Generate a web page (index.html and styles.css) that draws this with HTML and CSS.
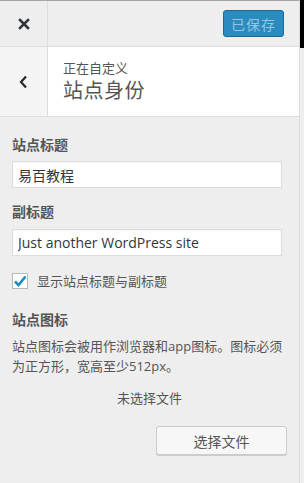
FILE: index.html
```html
<!DOCTYPE html>
<html lang="zh-CN">
<head>
  <meta charset="UTF-8">
  <meta name="viewport" content="width=device-width, initial-scale=1.0">
  <title>站点身份</title>
  <link rel="stylesheet" href="styles.css">
</head>
<body>
  <div class="frame">
    <!-- Panneau de personnalisation -->
    <div class="panel">
      <div class="topbar">
        <button class="close" type="button" aria-label="关闭">
          <svg width="12" height="12" viewBox="0 0 12 12"><path d="M2 2 L10 10 M10 2 L2 10" stroke="#32373c" stroke-width="2.6" stroke-linecap="square"/></svg>
        </button>
        <button class="saved" type="button" disabled>已保存</button>
      </div>

      <div class="section-title">
        <button class="back" type="button" aria-label="返回">
          <svg width="9" height="14" viewBox="0 0 9 14"><path d="M7 1.5 L2 7 L7 12.5" fill="none" stroke="#23282d" stroke-width="2.2"/></svg>
        </button>
        <div class="title-text">
          <span class="action">正在自定义</span>
          <h2>站点身份</h2>
        </div>
      </div>

      <div class="controls">
        <label class="field-label" for="blogname">站点标题</label>
        <input type="text" id="blogname" value="易百教程">

        <label class="field-label" for="blogdescription">副标题</label>
        <input type="text" id="blogdescription" value="Just another WordPress site">

        <label class="check-row">
          <span class="checkbox">
            <svg width="14" height="12" viewBox="0 0 14 12"><path d="M2 6.5 L5.5 10 L12.5 1.5" fill="none" stroke="#1e8cbe" stroke-width="2.6"/></svg>
          </span>
          显示站点标题与副标题
        </label>

        <h3 class="field-label icon-label">站点图标</h3>
        <p class="description">站点图标会被用作浏览器和app图标。图标必须为正方形，宽高至少512px。</p>

        <div class="file-area">
          <p class="no-file">未选择文件</p>
          <div class="file-actions">
            <button class="select-file" type="button">选择文件</button>
          </div>
        </div>
      </div>
    </div>

    <!-- Bord de la prévisualisation -->
    <div class="edge">
      <div class="edge-top"></div>
    </div>
  </div>
</body>
</html>
```

FILE: styles.css
```css
* {
  margin: 0;
  padding: 0;
  box-sizing: border-box;
}

body {
  font-family: "Open Sans", "Noto Sans CJK SC", sans-serif;
  background-color: #eee;
  color: #555;
  width: 304px;
  height: 483px;
  overflow: hidden;
}

.frame {
  display: flex;
  height: 483px;
}

.panel {
  width: 300px;
  background-color: #eee;
  border-top: 1px solid #a0a5aa;
  border-right: 1px solid #ddd;
  display: flex;
  flex-direction: column;
}

.topbar {
  height: 46px;
  display: flex;
  align-items: center;
  border-bottom: 1px solid #ddd;
}

.close {
  width: 48px;
  height: 45px;
  border: none;
  border-right: 1px solid #ddd;
  background: transparent;
  display: flex;
  align-items: center;
  justify-content: center;
}

.saved {
  margin-left: auto;
  margin-right: 15px;
  width: 61px;
  height: 27px;
  border: 1px solid #1b6a95;
  border-radius: 3px;
  background-color: #2b8bbf;
  color: #94c6e2;
  font-family: "Open Sans", "Noto Sans CJK SC", sans-serif;
  font-size: 14px;
  letter-spacing: 1px;
}

.section-title {
  height: 70px;
  display: flex;
  border-bottom: 1px solid #ddd;
}

.back {
  width: 48px;
  border: none;
  border-right: 1px solid #ddd;
  background-color: #f4f4f4;
  display: flex;
  align-items: center;
  justify-content: center;
}

.title-text {
  flex: 1;
  background-color: #fff;
  padding: 12px 15px 0;
  display: flex;
  flex-direction: column;
}

.action {
  font-size: 13px;
  line-height: 18px;
  color: #555;
}

.title-text h2 {
  font-size: 20px;
  font-weight: 400;
  line-height: 28px;
  color: #555;
  letter-spacing: 0.5px;
}

.controls {
  padding: 18px 17px 0 12px;
  display: flex;
  flex-direction: column;
}

.field-label {
  display: block;
  font-size: 14px;
  font-weight: 700;
  line-height: 20px;
  color: #555;
  margin-bottom: 6px;
}

input[type="text"] {
  width: 100%;
  height: 27px;
  padding: 0 5px;
  margin-bottom: 14px;
  border: 1px solid #ddd;
  background-color: #fff;
  font-family: "Open Sans", "Noto Sans CJK SC", sans-serif;
  font-size: 14px;
  color: #32373c;
  box-shadow: inset 0 1px 2px rgba(0, 0, 0, 0.04);
}

#blogdescription {
  margin-top: 1px;
}

.check-row {
  display: flex;
  align-items: center;
  gap: 9px;
  font-size: 13px;
  line-height: 20px;
  color: #555;
  margin-top: 1px;
}

.checkbox {
  width: 16px;
  height: 16px;
  border: 1px solid #b4b9be;
  background-color: #fff;
  display: flex;
  align-items: center;
  justify-content: center;
}

.icon-label {
  margin-top: 19px;
}

.description {
  font-size: 13px;
  line-height: 20px;
  color: #555;
  margin-right: -6px;
}

.file-area {
  margin-right: -5px;
}

.no-file {
  text-align: center;
  font-size: 13px;
  line-height: 20px;
  margin-top: 12px;
}

.file-actions {
  display: flex;
  justify-content: flex-end;
  margin-top: 18px;
}

.select-file {
  width: 131px;
  height: 29px;
  border: 1px solid #ccc;
  border-radius: 3px;
  background-color: #f7f7f7;
  box-shadow: 0 1px 0 #ccc;
  font-family: "Open Sans", "Noto Sans CJK SC", sans-serif;
  font-size: 14px;
  color: #555;
}

.edge {
  flex: 1;
  background-color: #eee;
}

.edge-top {
  height: 48px;
  background-color: #000;
}
```
